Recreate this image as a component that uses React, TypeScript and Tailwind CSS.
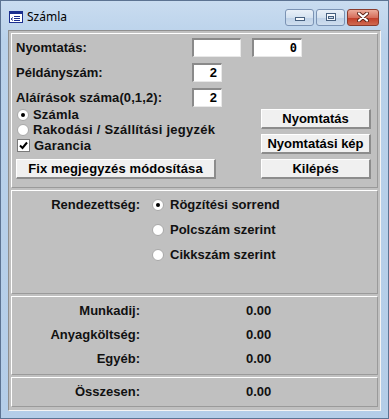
import React from "react";

const font = { fontFamily: '"Liberation Sans", Arial, sans-serif' };

const Field = ({ w, value, mono }: { w: string; value?: string; mono?: boolean }) => (
  <div
    className={`${w} h-[19px] bg-white border-t-2 border-l-2 border-t-[#8a8a8a] border-l-[#8a8a8a] border-b border-r border-b-[#e8e8e8] border-r-[#e8e8e8] flex items-center justify-end pr-[4px] text-[13px] font-bold text-black`}
    style={mono ? { fontFamily: '"DejaVu Sans Mono", monospace', fontSize: 12 } : undefined}
  >
    {value}
  </div>
);

const Radio = ({ checked }: { checked?: boolean }) => (
  <span className="w-[12px] h-[12px] rounded-full bg-white border border-[#a8a8a8] flex items-center justify-center shrink-0">
    {checked && <span className="w-[4px] h-[4px] rounded-full bg-black" />}
  </span>
);

const Check = () => (
  <span className="w-[13px] h-[13px] bg-white border border-[#7a7a7a] flex items-center justify-center shrink-0">
    <svg width="9" height="9" viewBox="0 0 9 9">
      <path d="M1 4.5 L3.5 7 L8 1.5" stroke="#000" strokeWidth="2" fill="none" />
    </svg>
  </span>
);

const Btn = ({ children, className }: { children: React.ReactNode; className?: string }) => (
  <div
    className={`h-[20px] bg-[#f0f0f0] border-t border-l border-t-white border-l-white border-b-2 border-r-2 border-b-[#8c8c8c] border-r-[#8c8c8c] flex items-center justify-center text-[13px] font-bold text-black ${className ?? ""}`}
  >
    {children}
  </div>
);

const Panel = ({ children, className }: { children: React.ReactNode; className?: string }) => (
  <div
    className={`border-t border-l border-t-white border-l-white border-b border-r border-b-[#9a9a9a] border-r-[#9a9a9a] ${className ?? ""}`}
  >
    {children}
  </div>
);

const CapBtn = ({ children, close }: { children: React.ReactNode; close?: boolean }) => (
  <div
    className={
      "h-[17px] rounded-[3px] border flex items-center justify-center " +
      (close
        ? "w-[32px] border-[#8a3b2c] bg-[linear-gradient(#ecab9a,#d66f5c_50%,#c23f2a_55%,#d06a50)]"
        : "w-[29px] border-[#7b93b4] bg-[linear-gradient(#e9f0f8,#d5e2f0_50%,#bfd2e8_55%,#cfdeee)]")
    }
  >
    {children}
  </div>
);

export default function App() {
  return (
    <div
      className="w-[389px] h-[419px] bg-[linear-gradient(#c9dcf0,#b9d1ea_40px,#b4cde8)] border border-[#5c7392] flex flex-col overflow-hidden"
      style={font}
    >
      {/* title bar */}
      <div className="h-[29px] flex items-center pl-[8px] pr-[9px] shrink-0">
        <svg width="14" height="12" viewBox="0 0 14 12" className="mt-[2px]">
          <rect x="0.5" y="0.5" width="13" height="11" fill="#fff" stroke="#1b2f8f" />
          <rect x="1" y="1" width="12" height="2" fill="#1b2f8f" />
          <path d="M5 5.5h6M5 7.5h6M5 9.5h6" stroke="#1b2f8f" />
          <path d="M4 6.5 L2 8 L4 9.5" stroke="#1b2f8f" fill="none" />
        </svg>
        <span
          className="ml-[4px] mt-[2px] text-[12px] text-black"
          style={{ fontFamily: '"Noto Sans", "Open Sans", sans-serif' }}
        >
          Számla
        </span>
        <div className="ml-auto flex gap-[2px] mt-[3px]">
          <CapBtn>
            <span className="w-[10px] h-[4px] bg-[#f6f9fc] border border-[#47607f] mt-[4px]" />
          </CapBtn>
          <CapBtn>
            <span className="w-[10px] h-[8px] bg-[#f6f9fc] border border-[#47607f] flex items-center justify-center">
              <span className="w-[6px] h-[3px] border border-[#47607f] bg-[#cddbea]" />
            </span>
          </CapBtn>
          <CapBtn close>
            <svg width="12" height="10" viewBox="0 0 12 10">
              <path d="M2 1.5 L10 8.5 M10 1.5 L2 8.5" stroke="#5a2216" strokeWidth="4" strokeLinecap="round" />
              <path d="M2 1.5 L10 8.5 M10 1.5 L2 8.5" stroke="#fff" strokeWidth="2.2" strokeLinecap="round" />
            </svg>
          </CapBtn>
        </div>
      </div>

      {/* client area */}
      <div className="mx-[7px] h-[381px] bg-[#c0c0c0] border-t border-l border-t-[#8f8f8f] border-l-[#8f8f8f] border-b border-r border-b-[#f4f4f4] border-r-[#f4f4f4] px-[2px] pt-[2px] flex flex-col gap-[2px]">
        {/* print panel */}
        <Panel className="h-[155px] pl-[4px] pt-[4px] text-[13px] font-bold text-[#111]">
          <div className="flex items-center h-[19px]">
            <span className="w-[176px]">Nyomtatás:</span>
            <Field w="w-[49px]" />
            <span className="w-[11px]" />
            <Field w="w-[50px]" value="0" mono />
          </div>
          <div className="flex items-center h-[19px] mt-[6px]">
            <span className="w-[176px]">Példányszám:</span>
            <Field w="w-[30px]" value="2" />
          </div>
          <div className="flex items-center h-[19px] mt-[6px]">
            <span className="w-[176px] tracking-[0.1px]">Aláírások száma(0,1,2):</span>
            <Field w="w-[30px]" value="2" />
          </div>
          <div className="flex">
            <div className="w-[245px] flex flex-col">
              <div className="flex items-center h-[15px] pl-[1px] gap-[4px]">
                <Radio checked />
                <span className="tracking-[0.2px]">Számla</span>
              </div>
              <div className="flex items-center h-[16px] pl-[1px] gap-[4px]">
                <Radio />
                <span className="tracking-[0.25px]">Rakodási / Szállítási jegyzék</span>
              </div>
              <div className="flex items-center h-[15px] pl-[1px] gap-[4px]">
                <Check />
                <span className="tracking-[0.2px]">Garancia</span>
              </div>
              <Btn className="w-[200px] mt-[6px] tracking-[0.1px]">Fix megjegyzés módosítása</Btn>
            </div>
            <div className="flex flex-col gap-[5px] pt-[2px]">
              <Btn className="w-[110px]">Nyomtatás</Btn>
              <Btn className="w-[110px]">Nyomtatási kép</Btn>
              <Btn className="w-[110px]">Kilépés</Btn>
            </div>
          </div>
        </Panel>

        {/* sort panel */}
        <Panel className="h-[104px] pt-[6px] text-[13px] font-bold text-[#111]">
          <div className="flex">
            <span className="w-[128px] text-right h-[16px] leading-[16px]">Rendezettség:</span>
            <div className="ml-[12px] flex flex-col gap-[9px]">
              <div className="flex items-center h-[16px] gap-[6px]">
                <Radio checked />
                <span>Rögzítési sorrend</span>
              </div>
              <div className="flex items-center h-[16px] gap-[6px]">
                <Radio />
                <span>Polcszám szerint</span>
              </div>
              <div className="flex items-center h-[16px] gap-[6px]">
                <Radio />
                <span>Cikkszám szerint</span>
              </div>
            </div>
          </div>
        </Panel>

        {/* totals */}
        <Panel className="h-[79px] pt-[6px] text-[13px] font-bold text-[#111] flex flex-col gap-[8px]">
          {[
            ["Munkadij:", "0.00"],
            ["Anyagköltség:", "0.00"],
            ["Egyéb:", "0.00"],
          ].map(([l, v]) => (
            <div key={l} className="flex h-[16px] leading-[16px]">
              <span className="w-[128px] text-right">{l}</span>
              <span className="ml-[106px]">{v}</span>
            </div>
          ))}
        </Panel>
        <Panel className="h-[30px] text-[13px] font-bold text-[#111] flex items-center">
          <div className="flex h-[16px] leading-[16px]">
            <span className="w-[128px] text-right">Összesen:</span>
            <span className="ml-[106px]">0.00</span>
          </div>
        </Panel>
      </div>
    </div>
  );
}
